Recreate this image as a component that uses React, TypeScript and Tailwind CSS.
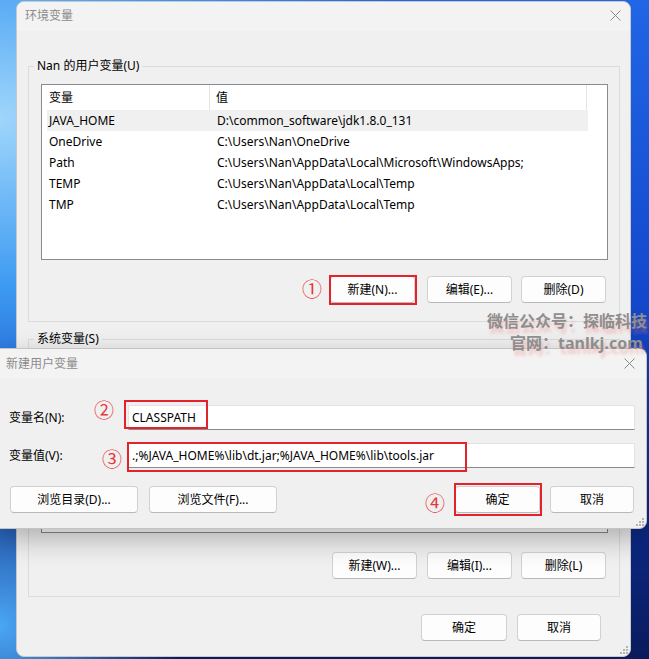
const userVars = [
  { name: "JAVA_HOME", value: "D:\\common_software\\jdk1.8.0_131" },
  { name: "OneDrive", value: "C:\\Users\\Nan\\OneDrive" },
  { name: "Path", value: "C:\\Users\\Nan\\AppData\\Local\\Microsoft\\WindowsApps;" },
  { name: "TEMP", value: "C:\\Users\\Nan\\AppData\\Local\\Temp" },
  { name: "TMP", value: "C:\\Users\\Nan\\AppData\\Local\\Temp" },
];

function CloseIcon() {
  return (
    <svg width="11" height="11" viewBox="0 0 11 11">
      <path d="M0.5 0.5 L10.5 10.5 M10.5 0.5 L0.5 10.5" stroke="#8a8a8a" strokeWidth="1" />
    </svg>
  );
}

function Grip() {
  return (
    <svg width="8" height="8" viewBox="0 0 8 8">
      <rect x="6" y="0" width="2" height="2" fill="#b5b5b5" />
      <rect x="3" y="3" width="2" height="2" fill="#b5b5b5" />
      <rect x="6" y="3" width="2" height="2" fill="#b5b5b5" />
      <rect x="0" y="6" width="2" height="2" fill="#b5b5b5" />
      <rect x="3" y="6" width="2" height="2" fill="#b5b5b5" />
      <rect x="6" y="6" width="2" height="2" fill="#b5b5b5" />
    </svg>
  );
}

function Btn({ label, className = "" }: { label: string; className?: string }) {
  return (
    <button
      className={`h-[27px] rounded-[4px] border border-[#d1d1d1] border-b-[#b9b9b9] bg-[#fdfdfd] text-[12px] text-black ${className}`}
    >
      {label}
    </button>
  );
}

function GroupLabel({ text }: { text: string }) {
  return (
    <div className="-mt-[9px] ml-[5px] w-fit bg-[#f0f0f0] px-[3px] text-[12px] leading-[16px] text-black">
      {text}
    </div>
  );
}

function Circled({ ch, x, y }: { ch: string; x: string; y: string }) {
  return (
    <div
      className={`absolute ${x} ${y} flex h-[24px] w-[24px] items-center justify-center text-[20px] leading-none text-[#e8363c]`}
    >
      {ch}
    </div>
  );
}

export default function App() {
  return (
    <div className="relative h-[659px] w-[649px] overflow-hidden bg-[radial-gradient(ellipse_at_0%_18%,#9fd6fb_0%,#3d9af2_22%,transparent_45%),radial-gradient(ellipse_at_0%_95%,#4aa6f5_0%,transparent_20%),linear-gradient(180deg,#2066e6_0%,#1448cc_45%,#0c2c90_75%,#0a1a5c_100%)] pt-[1px] font-['Noto_Sans','Noto_Sans_CJK_SC',sans-serif]">
      {/* 环境变量 */}
      <div className="ml-[16px] flex h-[656px] w-[615px] flex-col overflow-hidden rounded-[8px] border border-[#c9c9c9] bg-[#f0f0f0]">
        <div className="flex h-[29px] items-center justify-between bg-[#f3f3f3] pb-[2px] pl-[8px] pr-[9px]">
          <span className="text-[12px] text-[#8b8b8b]">环境变量</span>
          <CloseIcon />
        </div>
        <div className="relative flex-1 pl-[11px]">
          <div className="mt-[35px] h-[256px] w-[592px] border border-[#dcdcdc]">
            <GroupLabel text="Nan 的用户变量(U)" />
            <div className="ml-[12px] mt-[10px] h-[176px] w-[567px] border border-[#878b92] bg-white text-[12px] text-black">
              <div className="flex h-[25px]">
                <div className="flex w-[168px] items-center border-r border-[#e5e5e5] pl-[7px]">变量</div>
                <div className="flex w-[377px] items-center border-r border-[#e5e5e5] pl-[6px]">值</div>
              </div>
              <div className="pl-[5px]">
                {userVars.map((v, i) => (
                  <div
                    key={v.name}
                    className={`flex h-[21px] w-[541px] items-center ${i === 0 ? "bg-[#f0f0f0]" : ""}`}
                  >
                    <div className="w-[170px] pl-[2px]">{v.name}</div>
                    <div>{v.value}</div>
                  </div>
                ))}
              </div>
            </div>
            <div className="mt-[16px] flex justify-end pr-[13px]">
              <Btn label="新建(N)..." className="w-[85px]" />
              <Btn label="编辑(E)..." className="ml-[12px] w-[85px]" />
              <Btn label="删除(D)" className="ml-[9px] w-[85px]" />
            </div>
          </div>

          <div className="mt-[17px] h-[258px] w-[592px] border border-[#dcdcdc]">
            <GroupLabel text="系统变量(S)" />
            <div className="ml-[12px] mt-[10px] h-[176px] w-[567px] border border-[#878b92] bg-white" />
            <div className="mt-[19px] flex justify-end pr-[13px]">
              <Btn label="新建(W)..." className="w-[85px]" />
              <Btn label="编辑(I)..." className="ml-[10px] w-[85px]" />
              <Btn label="删除(L)" className="ml-[9px] w-[85px]" />
            </div>
          </div>

          <div className="mt-[17px] flex justify-end pr-[29px]">
            <Btn label="确定" className="w-[86px]" />
            <Btn label="取消" className="ml-[10px] w-[84px]" />
          </div>
          <div className="absolute bottom-[2px] right-[2px]">
            <Grip />
          </div>
        </div>
      </div>

      {/* 新建用户变量 */}
      <div className="absolute left-0 top-[348px] flex h-[181px] w-[647px] flex-col overflow-hidden rounded-r-[8px] border-y border-r border-[#c4c4c4] bg-[#f0f0f0] shadow-[0_10px_28px_rgba(0,0,0,0.28)]">
        <div className="flex h-[29px] items-center justify-between bg-[#f3f3f3] pl-[6px] pr-[11px]">
          <span className="text-[12px] text-[#8b8b8b]">新建用户变量</span>
          <CloseIcon />
        </div>
        <div className="relative flex-1 text-[12px] text-black">
          <div className="mt-[27px] flex h-[25px] items-center">
            <div className="w-[128px] pl-[9px]">变量名(N):</div>
            <div className="flex h-[25px] w-[507px] items-center border border-[#e3e3e3] border-b-[#8a8a8a] bg-white pl-[3px]">
              CLASSPATH
            </div>
          </div>
          <div className="mt-[13px] flex h-[25px] items-center">
            <div className="w-[128px] pl-[9px]">变量值(V):</div>
            <div className="flex h-[25px] w-[507px] items-center border border-[#e3e3e3] border-b-[#8a8a8a] bg-white pl-[3px]">
              .;%JAVA_HOME%\lib\dt.jar;%JAVA_HOME%\lib\tools.jar
            </div>
          </div>
          <div className="mt-[18px] flex pl-[10px] pr-[12px]">
            <Btn label="浏览目录(D)..." className="w-[128px]" />
            <Btn label="浏览文件(F)..." className="ml-[11px] w-[128px]" />
            <Btn label="确定" className="ml-auto w-[85px]" />
            <Btn label="取消" className="ml-[10px] w-[84px]" />
          </div>
          <div className="absolute bottom-[2px] right-[2px]">
            <Grip />
          </div>
        </div>
      </div>

      {/* 标注 */}
      <div className="absolute left-[329px] top-[275px] h-[30px] w-[88px] border-2 border-[#e3222b]" />
      <div className="absolute left-[124px] top-[400px] h-[29px] w-[84px] border-2 border-[#e3222b]" />
      <div className="absolute left-[127px] top-[442px] h-[30px] w-[340px] border-2 border-[#e3222b]" />
      <div className="absolute left-[454px] top-[483px] h-[33px] w-[88px] border-2 border-[#e3222b]" />
      <Circled ch="①" x="left-[300px]" y="top-[278px]" />
      <Circled ch="②" x="left-[92px]" y="top-[399px]" />
      <Circled ch="③" x="left-[100px]" y="top-[448px]" />
      <Circled ch="④" x="left-[423px]" y="top-[492px]" />

      {/* 水印 */}
      <div className="absolute left-[487px] top-[310px] whitespace-nowrap text-[16px] font-bold leading-[22px] text-[#8e8e8e] [text-shadow:2px_5px_3px_rgba(240,120,120,0.35)]">
        微信公众号：探临科技
      </div>
      <div className="absolute left-[510px] top-[332px] whitespace-nowrap text-[16px] font-bold leading-[22px] text-[#8e8e8e] [text-shadow:2px_5px_3px_rgba(240,120,120,0.35)]">
        官网：tanlkj.com
      </div>
    </div>
  );
}
